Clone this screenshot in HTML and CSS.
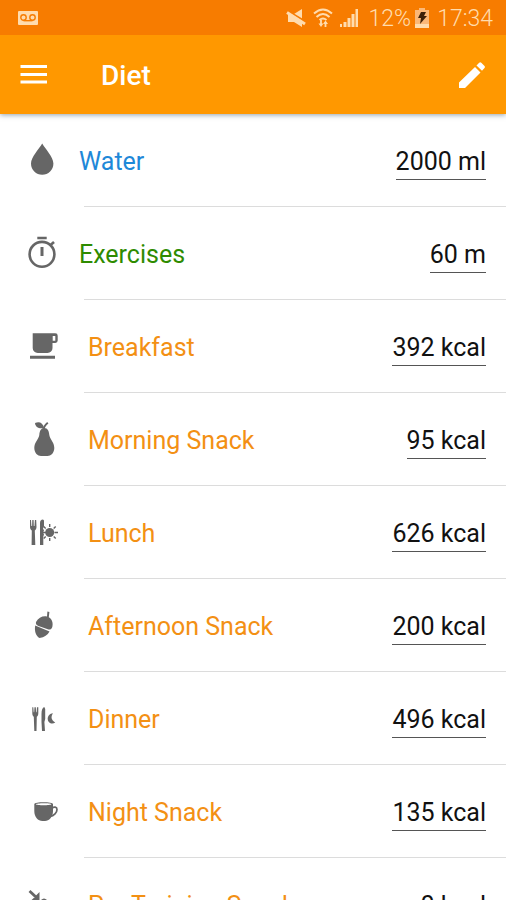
FILE: index.html
```html
<!DOCTYPE html>
<html lang="en">
<head>
<meta charset="utf-8">
<meta name="viewport" content="width=device-width, initial-scale=1">
<title>Diet</title>
<link rel="stylesheet" href="styles.css">
</head>
<body>
<div class="status">
  <svg class="voicemail" width="20" height="14" viewBox="0 0 20 14" aria-hidden="true">
    <rect width="20" height="14" rx="1" fill="#ffdcae"/>
    <g fill="none" stroke="#f77c00" stroke-width="1.4"><circle cx="5.5" cy="6.5" r="2.7"/><circle cx="14.5" cy="6.5" r="2.7"/><path d="M5.5 9.7h9"/></g>
  </svg>
  <div class="status-icons">
    <svg width="20" height="20" viewBox="0 0 20 20" aria-hidden="true">
      <path d="M2 6h6l8-5v18l-8-5H2z" fill="#ffdcae"/>
      <path d="M0 1.800L20 14" stroke="#f77c00" stroke-width="2"/><path d="M1 4.500L19 16" stroke="#ffdcae" stroke-width="3"/>
    </svg>
    <svg width="20" height="20" viewBox="0 0 20 20" aria-hidden="true">
      <g fill="none" stroke="#ffdcae" stroke-width="2"><path d="M1 5.500Q10-2.500 19 5.500M3.500 9Q10 3 16.500 9M6.500 12Q10 9 13.500 12"/></g>
      <path d="M8 12v5M12.500 19v-5" stroke="#ffdcae" stroke-width="1.800"/><path d="M5.500 15.500h5L8 19zM10 16h5l-2.500-3.500z" fill="#ffdcae"/>
    </svg>
    <svg width="20" height="20" viewBox="0 0 20 20" fill="#ffdcae" aria-hidden="true">
      <path d="M0 16h2v3H0zM3.500 14h3v5h-3zM7.500 10h3v9h-3zM11.500 6h3v13h-3zM15.500 1H18v18h-2.500z"/>
    </svg>
  </div>
  <span class="battery-level">12%</span>
  <svg class="battery" width="14" height="20" viewBox="0 0 14 20" aria-hidden="true">
    <path d="M4 0h6v2h4v18H0V2h4z" fill="#fbb878"/><path d="M0 16h14v4H0z" fill="#ffdcae"/>
    <path d="M6 4h5L9 8h3l-7 8 1-6H3z" fill="#3c2008"/>
  </svg>
  <time class="clock">17:34</time>
</div>
<header class="toolbar">
  <button class="tool" type="button" aria-label="Menu">
    <svg width="28" height="28" viewBox="0 0 28 28"><path d="M.5 5.500h26.500M.5 13.500h26.500M.5 21h26.500" stroke="#fff" stroke-width="3"/></svg>
  </button>
  <h1>Diet</h1>
  <button class="tool" type="button" aria-label="Edit">
    <svg width="28" height="28" viewBox="0 0 28 28" fill="#fff"><path d="M1 21.500L17 6l5.500 5.500L7 27H1zM18.500 4.500l2.700-2.700a1.500 1.500 0 0 1 2.100 0l3.200 3.200a1.500 1.500 0 0 1 0 2.100L24 9.800z"/></svg>
  </button>
</header>
<main>
<ul class="list">
  <li class="row water">
    <svg class="icon" viewBox="0 0 32 36" aria-hidden="true"><path d="M16.200 1.500C13 7 5 15 5 21.500a11.200 11.200 0 0 0 22.400 0C27.400 15 19.400 7 16.200 1.500z"/></svg>
    <label for="water">Water</label><input id="water" value="2000 ml" size="7">
  </li>
  <li class="row exercise">
    <svg class="icon" viewBox="0 0 32 36" aria-hidden="true"><circle cx="16" cy="19.300" r="12.400" fill="none" stroke="#666" stroke-width="2.600"/><path d="M11.300 1.700h9.400v2.600h-9.400zM14.500 12h3v9h-3z"/><path d="M24 10.500L28 7" stroke="#666" stroke-width="2.600"/></svg>
    <label for="exercise">Exercises</label><input id="exercise" value="60 m" size="4">
  </li>
  <li class="row meal">
    <svg class="icon" viewBox="0 0 32 36" aria-hidden="true"><path fill-rule="evenodd" d="M6.700 5.300h22.600a2.400 2.400 0 0 1 2.400 2.400V12.500a2.400 2.400 0 0 1-2.400 2.400H26.500V20a5 5 0 0 1-5 5h-9.800a5 5 0 0 1-5-5zM26.700 8v4.700h2.600V8zM4 27.700h25v3H4z"/></svg>
    <label for="breakfast">Breakfast</label><input id="breakfast" value="392 kcal" size="8">
  </li>
  <li class="row meal">
    <svg class="icon" viewBox="0 0 32 36" aria-hidden="true"><path d="M18.300 7c3.500 0 4.600 3 5 7 .6 4.500 5 7 5 13 0 5-3.500 8-6.700 8h-6.600c-3.200 0-6.700-3-6.700-8 0-6 4.400-8.500 5-13 .4-4 1.500-7 5-7z"/><path d="M9 2c4-2 8-.5 9 5C13 8 9.500 6.500 9 2z"/><path d="M17.500 9c0-3 1.500-5 4.300-7.300" fill="none" stroke="#666" stroke-width="2"/></svg>
    <label for="morning">Morning Snack</label><input id="morning" value="95 kcal" size="7">
  </li>
  <li class="row meal">
    <svg class="icon" viewBox="0 0 32 36" aria-hidden="true"><path d="M4 6h1l.4 6h.7l.2-6h1.300l.2 6h.7l.4-6h1.300l.3 7c0 2-1 3-1.700 3.500L9.300 31H5.600l.2-14.500C5 16 4 15 4 13zM14 31V9c0-2 1-3.500 3-3.500l1 1v6l-1 2 1 2-1 2 1 2-.7 2V31z"/><circle cx="23.700" cy="18.500" r="4.500"/><g stroke="#666" stroke-width="1.400"><path d="M23.700 10v3M23.700 24v3M28.500 18.500h3.500M27.700 14.500l2-2M27.700 22.500l2 2M19.700 14.500l-2-2M19.700 22.500l-2 2M20 18.500h-4"/></g></svg>
    <label for="lunch">Lunch</label><input id="lunch" value="626 kcal" size="8">
  </li>
  <li class="row meal">
    <svg class="icon" viewBox="0 0 32 36" aria-hidden="true"><path d="M10 15c2.500-4.500 7-6.500 11-5.500l.4-5 2 .5-.6 5.200c3.500 1.800 4.500 6 3.500 9.800-1 2.500-2.500 3-4.500 2.200L12.500 19c-2-.8-3-2-2.500-4z"/><path d="M9.200 18.500l14.300 6c-2 3.500-5 5.700-10 6.500-3.500-2-5.300-6.500-4.300-12.500z"/></svg>
    <label for="afternoon">Afternoon Snack</label><input id="afternoon" value="200 kcal" size="8">
  </li>
  <li class="row meal">
    <svg class="icon" viewBox="0 0 32 36" aria-hidden="true"><path d="M6.300 7.300h1l.4 5h.5l.3-5h1.300l.3 5h.5l.4-5h1.300v6c0 2-.7 3-1.500 3.500L10.500 31H8.300l-.5-14.200c-.8-.5-1.500-1.500-1.500-3.500zM15.500 22V14c0-4 1-6.500 2.800-7l.9 2v10l-.8 3 .6 9h-3z"/><path d="M27 13.300c-2.300 3-2 7 2.300 9.200-3.500 2.600-7.600.2-7.600-3.700 0-3 2.300-5.200 5.300-5.500z"/></svg>
    <label for="dinner">Dinner</label><input id="dinner" value="496 kcal" size="8">
  </li>
  <li class="row meal">
    <svg class="icon" viewBox="0 0 32 36" aria-hidden="true"><path fill-rule="evenodd" d="M8.300 11c0-2.400 18.700-2.400 18.700 0v7c0 6-4 10-8 10h-2.500c-4.500 0-8.200-4-8.200-10zM10 11.300c0 1.300 15.300 1.300 15.300 0s-15.300-1.300-15.300 0z"/><path d="M26 15c2-1.300 5-1.500 5 1.500s-3 6.500-7 7" fill="none" stroke="#666" stroke-width="1.700"/></svg>
    <label for="night">Night Snack</label><input id="night" value="135 kcal" size="8">
  </li>
  <li class="row meal">
    <svg class="icon" viewBox="0 0 32 36" aria-hidden="true"><path d="M3.500 5L11 12" stroke="#666" stroke-width="2.800"/><path d="M13.500 6v9H4.500l3.500-3.300h2V9.500z"/><path d="M15 14q3-3 6 0v16h-6z"/></svg>
    <label for="pretraining">Pre Training Snack</label><input id="pretraining" value="0 kcal" size="6">
  </li>
</ul>
</main>
</body>
</html>
```
FILE: styles.css
```css
* { box-sizing: border-box; }

body {
  margin: 0;
  height: 100vh;
  display: flex;
  flex-direction: column;
  overflow: hidden;
  background: #fff;
  font-family: Roboto, sans-serif;
  font-size: 25px;
}

.status {
  position: relative;
  z-index: 2;
  flex: none;
  display: flex;
  align-items: center;
  height: 35px;
  padding: 0 13px 0 18px;
  background: #f77c00;
  color: #ffdcae;
  font-size: 23px;
  font-weight: 300;
}

.battery-level,
.clock { padding-top: 2px; }

.status-icons {
  display: flex;
  gap: 7px;
  margin-left: auto;
  margin-right: 9px;
}

.battery { margin: 0 8px 0 4px; }

.toolbar {
  flex: none;
  display: flex;
  align-items: center;
  height: 79px;
  padding: 0 20px;
  background: #ff9800;
  color: #fff;
  box-shadow: 0 1px 5px rgba(40, 70, 90, .5);
  z-index: 1;
}

.toolbar h1 {
  flex: 1;
  margin: 0 0 0 53px;
  padding-top: 2px;
  font-size: 28px;
  font-weight: 500;
  line-height: 32px;
}

.tool {
  display: flex;
  padding: 0;
  border: 0;
  background: none;
}

main {
  flex: 1;
  min-height: 0;
  overflow-y: auto;
  scrollbar-width: none;
}

.list {
  margin: 0;
  padding: 0;
  list-style: none;
}

.row {
  display: grid;
  grid-template-columns: 32px 1fr auto;
  grid-template-rows: 92px 1px;
  align-items: center;
  padding: 0 20px 0 26px;
}

.row::after {
  content: "";
  grid-column: 1 / -1;
  height: 1px;
  margin: 0 -20px 0 58px;
  background: #dcdcdc;
}

.icon {
  width: 32px;
  height: 36px;
  fill: #666;
}

.row label {
  padding: 3px 0 0 21px;
  line-height: 32px;
}

.water label { color: #1e88d8; }
.exercise label { color: #2e8b00; }
.meal label { padding-left: 30px; color: #f39014; }

.row input {
  field-sizing: content;
  height: 40px;
  padding: 3px 0 0;
  border: 0;
  border-bottom: 1px solid #555;
  border-radius: 0;
  background: none;
  color: #111;
  font: inherit;
  text-align: right;
}
```
